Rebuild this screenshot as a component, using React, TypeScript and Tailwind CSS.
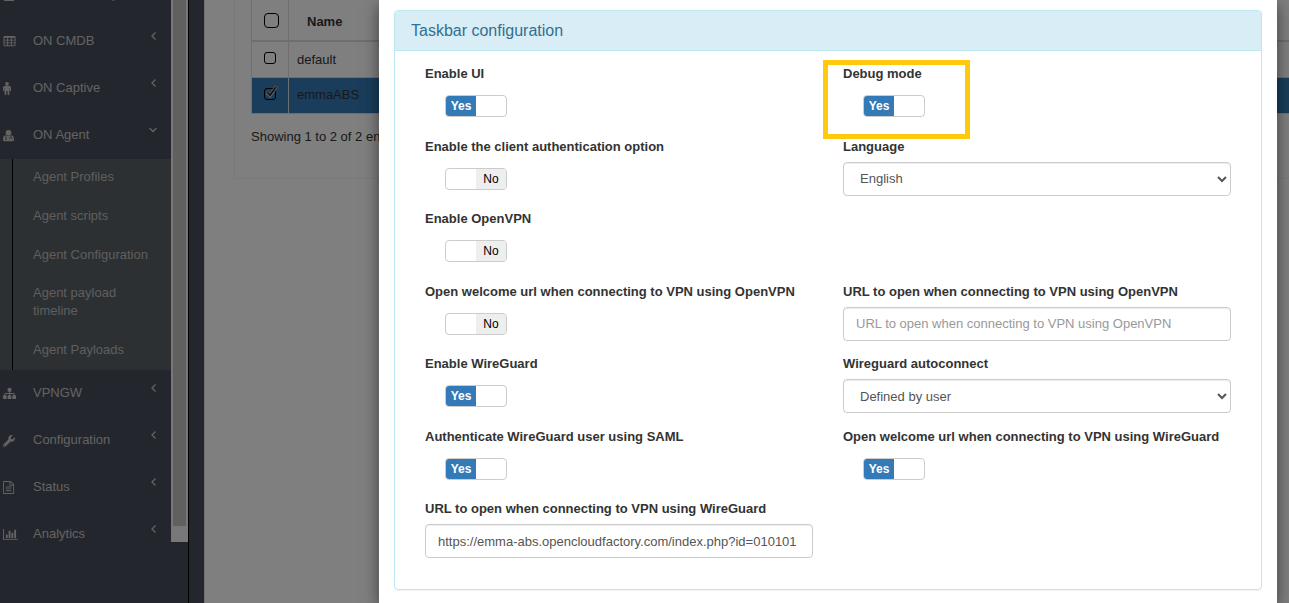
import { useState, type ReactNode } from "react";
import { FaWrench, FaUser } from "react-icons/fa";

function Glyph({ d, box, className }: { d: string; box: string; className: string }) {
  return (
    <svg viewBox={box} className={className} fill="currentColor" aria-hidden="true">
      <path d={d} />
    </svg>
  );
}

const TABLE =
  "M576 1376v-192q0-14-9-23t-23-9h-320q-14 0-23 9t-9 23v192q0 14 9 23t23 9h320q14 0 23-9t9-23zm0-384v-192q0-14-9-23t-23-9h-320q-14 0-23 9t-9 23v192q0 14 9 23t23 9h320q14 0 23-9t9-23zm512 384v-192q0-14-9-23t-23-9h-320q-14 0-23 9t-9 23v192q0 14 9 23t23 9h320q14 0 23-9t9-23zm-512-768v-192q0-14-9-23t-23-9h-320q-14 0-23 9t-9 23v192q0 14 9 23t23 9h320q14 0 23-9t9-23zm512 384v-192q0-14-9-23t-23-9h-320q-14 0-23 9t-9 23v192q0 14 9 23t23 9h320q14 0 23-9t9-23zm512 384v-192q0-14-9-23t-23-9h-320q-14 0-23 9t-9 23v192q0 14 9 23t23 9h320q14 0 23-9t9-23zm-512-768v-192q0-14-9-23t-23-9h-320q-14 0-23 9t-9 23v192q0 14 9 23t23 9h320q14 0 23-9t9-23zm512 384v-192q0-14-9-23t-23-9h-320q-14 0-23 9t-9 23v192q0 14 9 23t23 9h320q14 0 23-9t9-23zm0-384v-192q0-14-9-23t-23-9h-320q-14 0-23 9t-9 23v192q0 14 9 23t23 9h320q14 0 23-9t9-23zm128-320v1088q0 66-47 113t-113 47h-1344q-66 0-113-47t-47-113v-1088q0-66 47-113t113-47h1344q66 0 113 47t47 113z";
const SITEMAP =
  "M1792 1248v320q0 40-28 68t-68 28h-320q-40 0-68-28t-28-68v-320q0-40 28-68t68-28h96v-192h-512v192h96q40 0 68 28t28 68v320q0 40-28 68t-68 28h-320q-40 0-68-28t-28-68v-320q0-40 28-68t68-28h96v-192h-512v192h96q40 0 68 28t28 68v320q0 40-28 68t-68 28h-320q-40 0-68-28t-28-68v-320q0-40 28-68t68-28h96v-192q0-52 38-90t90-38h512v-192h-96q-40 0-68-28t-28-68v-320q0-40 28-68t68-28h320q40 0 68 28t28 68v320q0 40-28 68t-68 28h-96v192h512q52 0 90 38t38 90v192h96q40 0 68 28t28 68z";
const FILE_TEXT =
  "M1596 380q28 28 48 76t20 88v1152q0 40-28 68t-68 28h-1344q-40 0-68-28t-28-68v-1600q0-40 28-68t68-28h896q40 0 88 20t76 48zm-444-244v376h376q-10-29-22-41l-313-313q-12-12-41-22zm384 1528v-1024h-416q-40 0-68-28t-28-68v-416h-768v1536h1280zm-1024-864q0-14 9-23t23-9h704q14 0 23 9t9 23v64q0 14-9 23t-23 9h-704q-14 0-23-9t-9-23v-64zm736 224q14 0 23 9t9 23v64q0 14-9 23t-23 9h-704q-14 0-23-9t-9-23v-64q0-14 9-23t23-9h704zm0 256q14 0 23 9t9 23v64q0 14-9 23t-23 9h-704q-14 0-23-9t-9-23v-64q0-14 9-23t23-9h704z";
const BARS =
  "M640 896v512h-256v-512h256zm384-512v1024h-256v-1024h256zm1024 1152v128h-2048v-1536h128v1408h1920zm-640-896v768h-256v-768h256zm384-384v1152h-256v-1152h256z";
const MALE =
  "M4 0a1.9 1.9 0 1 1 0 3.8a1.9 1.9 0 1 1 0-3.8zM1.6 4h4.8Q8 4 8 5.6v3q0 .7-.65.7t-.65-.7V6h-.3v6.2q0 .8-.9.8t-.9-.8V9h-1.2v3.2q0 .8-.9.8t-.9-.8V6h-.3v2.6q0 .7-.65.7T0 8.600v-3Q0 4 1.600 4z";

function DoctorIcon() {
  return (
    <svg viewBox="0 0 11 13" className="h-[13px] w-[11px]" aria-hidden="true">
      <circle cx="5.500" cy="3.800" r="2.900" fill="currentColor" />
      <path d="M2.600 6.200Q5.500 8.300 8.400 6.200Q11 6.800 11 10.300V10.800Q11 12.300 9.500 12.300H1.500Q0 12.300 0 10.800V10.300Q0 6.800 2.600 6.200z" fill="currentColor" />
      <path d="M3 7v2.700M8 7v1.500M6.500 10.400V9.700Q6.500 8.500 8 8.500T9.500 9.700V10.400" fill="none" stroke="#484d5b" strokeWidth="0.7" />
      <circle cx="3" cy="10.200" r="0.800" fill="#484d5b" />
    </svg>
  );
}

function NavItem({ icon, label, open = false }: { icon: ReactNode; label: string; open?: boolean }) {
  return (
    <a href="#" className="flex h-[47px] items-center pb-[2px] pl-[3px] pr-[13px]">
      <span className="flex w-[30px] shrink-0 items-center pt-[2px]">{icon}</span>
      <span className="flex-1 whitespace-nowrap">{label}</span>
      <svg viewBox="0 0 10 10" className="mb-[10px] h-[10px] w-[10px]" fill="none" stroke="currentColor" strokeWidth="1.3" aria-hidden="true">
        {open ? <path d="M1.500 3 5 6.500 8.500 3" /> : <path d="M7.500 1.500 4 5l3.500 3.500" />}
      </svg>
    </a>
  );
}

const agentLinks = ["Agent Profiles", "Agent scripts", "Agent Configuration", "Agent payload timeline", "Agent Payloads"];

function Sidebar() {
  return (
    <aside className="flex w-[204px] shrink-0 bg-[#484d5b] text-[#c6c6c6]">
      <nav className="-mt-[29px] w-[171px] shrink-0">
        <NavItem icon={<FaUser className="h-3 w-3" />} label="ON Cloud Map" />
        <NavItem icon={<Glyph d={TABLE} box="0 0 1792 1792" className="h-[13px] w-[13px]" />} label="ON CMDB" />
        <NavItem icon={<Glyph d={MALE} box="0 0 8 13" className="h-[13px] w-2" />} label="ON Captive" />
        <NavItem icon={<DoctorIcon />} label="ON Agent" open />
        <div className="flex min-h-[211px] bg-[#586166] pl-3">
          <ul className="flex flex-1 flex-col justify-between border-l border-black pl-5 pr-4 leading-[18px] text-[#bcbcbc]">
            {agentLinks.map((t) => (
              <li key={t} className="pb-[11px] pt-[9px]">
                <a href="#" className="block">
                  {t}
                </a>
              </li>
            ))}
          </ul>
        </div>
        <NavItem icon={<Glyph d={SITEMAP} box="0 0 1792 1792" className="h-[13px] w-[13px]" />} label="VPNGW" />
        <NavItem icon={<FaWrench className="h-3 w-3" />} label="Configuration" />
        <NavItem icon={<Glyph d={FILE_TEXT} box="128 0 1664 1792" className="h-[13px] w-3" />} label="Status" />
        <NavItem icon={<Glyph d={BARS} box="0 0 2048 1792" className="h-[13px] w-[15px]" />} label="Analytics" />
      </nav>
      <div className="h-[542px] w-[17px] bg-[#f1f1f1] px-[2px] pb-4">
        <div className="h-full bg-[#c1c1c1]" />
      </div>
      <div className="w-px bg-black" />
    </aside>
  );
}

function Tick({ large = false, label }: { large?: boolean; label: string }) {
  return (
    <input
      type="checkbox"
      aria-label={label}
      className={
        large
          ? "block h-[15px] w-[15px] appearance-none rounded-[4px] border border-black"
          : "block h-3 w-3 appearance-none rounded-[3px] border border-black"
      }
    />
  );
}

function Background() {
  return (
    <main className="min-w-0 flex-1 border-l border-[#e0e0e0] bg-white pl-[29px]">
      <div className="h-[179px] rounded-b border-b border-l border-[#f2f2f2] pl-4">
        <table className="w-full border-collapse text-left text-[#333]">
          <thead>
            <tr className="h-[41px] border-b-2 border-[#ddd]">
              <th className="w-[37px] border-l border-r border-[#ddd] pl-3">
                <Tick large label="Select all" />
              </th>
              <th className="pl-[18px] pt-[3px] font-bold">Name</th>
            </tr>
          </thead>
          <tbody>
            <tr className="h-9 border-b border-[#ddd]">
              <td className="border-l border-r border-[#ddd] pb-[2px] pl-3">
                <Tick label="Select default" />
              </td>
              <td className="pl-2">default</td>
            </tr>
            <tr className="h-9 border-b border-[#ddd] bg-[#337ab7]">
              <td className="border-l border-r border-[#ddd] pb-[2px] pl-3">
                <span className="relative block w-3">
                  <Tick label="Select emmaABS" />
                  <svg viewBox="0 0 14 14" className="pointer-events-none absolute -top-[3px] left-[1px] h-[14px] w-[14px]" fill="none" aria-hidden="true">
                    <path d="M2 7.500 5 10.500 11.500 1.500" stroke="#b8b8c8" strokeWidth="3.600" />
                    <path d="M2.500 7.500 5 10.200 11 2" stroke="#222" strokeWidth="1.600" />
                  </svg>
                </span>
              </td>
              <td className="pl-2">emmaABS</td>
            </tr>
          </tbody>
        </table>
        <p className="mt-[13px] whitespace-nowrap leading-5 text-[#333]">Showing 1 to 2 of 2 entries</p>
      </div>
    </main>
  );
}

function Field({ id, label, children }: { id: string; label: string; children: ReactNode }) {
  return (
    <div className="relative px-[15px]">
      <label htmlFor={id} className="mb-[6px] block whitespace-nowrap font-bold leading-[18px] text-[#333]">
        {label}
      </label>
      {children}
    </div>
  );
}

function Toggle({ id, initial }: { id: string; initial: boolean }) {
  const [on, setOn] = useState(initial);
  return (
    <button
      id={id}
      type="button"
      role="switch"
      aria-checked={on}
      onClick={() => setOn(!on)}
      className="ml-5 mt-3 flex h-[22px] w-[62px] overflow-hidden rounded border border-[#ccc] bg-white text-xs leading-5"
    >
      {on ? (
        <span className="w-[30px] bg-[#337ab7] text-center font-bold text-white">Yes</span>
      ) : (
        <span className="ml-auto w-[30px] bg-[#eee] text-center text-black">No</span>
      )}
    </button>
  );
}

const boxClass =
  "h-[34px] w-full rounded border border-[#ccc] bg-white px-3 text-[#555] shadow-[inset_0_1px_1px_rgba(0,0,0,0.075)] placeholder:text-[#999]";

function Choice({ id, options }: { id: string; options: string[] }) {
  return (
    <select id={id} className={boxClass}>
      {options.map((o) => (
        <option key={o}>{o}</option>
      ))}
    </select>
  );
}

function TaskbarPanel() {
  return (
    <section className="rounded border border-[#bce8f1] shadow-[0_1px_1px_rgba(0,0,0,0.05)]">
      <h3 className="rounded-t-[3px] border-b border-[#bce8f1] bg-[#d9edf7] px-4 py-[10px] text-base leading-[19px] text-[#31708f]">
        Taskbar configuration
      </h3>
      <form className="grid min-h-[538px] auto-rows-fr grid-cols-2 px-[15px] pb-4 pt-[14px]">
        <Field id="ui" label="Enable UI">
          <Toggle id="ui" initial />
        </Field>
        <Field id="debug" label="Debug mode">
          <Toggle id="debug" initial />
          <div className="pointer-events-none absolute -left-[5px] -top-[5px] z-10 h-[79px] w-[147px] border-[5px] border-[#ffc90e]" />
        </Field>
        <Field id="auth" label="Enable the client authentication option">
          <Toggle id="auth" initial={false} />
        </Field>
        <Field id="lang" label="Language">
          <Choice id="lang" options={["English", "Spanish"]} />
        </Field>
        <Field id="ovpn" label="Enable OpenVPN">
          <Toggle id="ovpn" initial={false} />
        </Field>
        <div />
        <Field id="ovpn-open" label="Open welcome url when connecting to VPN using OpenVPN">
          <Toggle id="ovpn-open" initial={false} />
        </Field>
        <Field id="ovpn-url" label="URL to open when connecting to VPN using OpenVPN">
          <input id="ovpn-url" type="text" placeholder="URL to open when connecting to VPN using OpenVPN" className={boxClass} />
        </Field>
        <Field id="wg" label="Enable WireGuard">
          <Toggle id="wg" initial />
        </Field>
        <Field id="wg-auto" label="Wireguard autoconnect">
          <Choice id="wg-auto" options={["Defined by user", "Always", "Never"]} />
        </Field>
        <Field id="saml" label="Authenticate WireGuard user using SAML">
          <Toggle id="saml" initial />
        </Field>
        <Field id="wg-open" label="Open welcome url when connecting to VPN using WireGuard">
          <Toggle id="wg-open" initial />
        </Field>
        <Field id="wg-url" label="URL to open when connecting to VPN using WireGuard">
          <input id="wg-url" type="text" defaultValue="https://emma-abs.opencloudfactory.com/index.php?id=010101" className={boxClass} />
        </Field>
      </form>
    </section>
  );
}

export default function App() {
  return (
    <div className="relative h-screen overflow-hidden font-['Liberation_Sans',Arial,sans-serif] text-[13px]">
      <div className="flex h-full">
        <Sidebar />
        <Background />
      </div>
      <div className="absolute inset-0 flex bg-black/50 pl-[379px] pr-3">
        <div role="dialog" aria-label="Agent configuration" className="min-h-full flex-1 bg-white px-[15px] pt-[10px] shadow-[0_5px_15px_rgba(0,0,0,0.5)]">
          <TaskbarPanel />
        </div>
      </div>
    </div>
  );
}
